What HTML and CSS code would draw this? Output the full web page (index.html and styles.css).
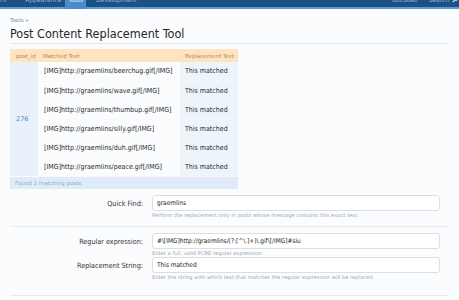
FILE: index.html
```html
<!DOCTYPE html>
<html>
<head>
<meta charset="utf-8">
<link rel="stylesheet" href="styles.css">
</head>
<body>
<div class="topbar">
  <div class="tabs">
    <span class="tab">ers</span>
    <span class="tab">Appearance</span>
    <span class="tab active">Tools</span>
    <span class="tab">Development</span>
  </div>
  <div class="tabs right">
    <span class="tab">Bbcodes</span>
    <span class="tab">Search
      <svg class="mag" width="7" height="7" viewBox="0 0 7 7"><circle cx="4.3" cy="2.7" r="1.8" fill="none" stroke="#d6e6f5" stroke-width="0.9"/><path d="M3 4 L0.8 6.2" stroke="#d6e6f5" stroke-width="1.1"/></svg>
    </span>
  </div>
</div>
<div class="strip"></div>
<div class="page">
  <div class="crumb">Tools »</div>
  <h1 class="title">Post Content Replacement Tool</h1>

  <table class="results">
    <colgroup><col class="w-id"><col class="w-match"><col class="w-rep"></colgroup>
    <thead>
      <tr><th class="c-id">post_id</th><th class="c-match">Matched Text</th><th class="c-rep">Replacement Text</th></tr>
    </thead>
    <tbody>
      <tr><td class="c-id" rowspan="6">276</td><td class="c-match">[IMG]http://graemlins/beerchug.gif[/IMG]</td><td class="c-rep">This matched</td></tr>
      <tr><td class="c-match">[IMG]http://graemlins/wave.gif[/IMG]</td><td class="c-rep">This matched</td></tr>
      <tr><td class="c-match">[IMG]http://graemlins/thumbup.gif[/IMG]</td><td class="c-rep">This matched</td></tr>
      <tr><td class="c-match">[IMG]http://graemlins/silly.gif[/IMG]</td><td class="c-rep">This matched</td></tr>
      <tr><td class="c-match">[IMG]http://graemlins/duh.gif[/IMG]</td><td class="c-rep">This matched</td></tr>
      <tr><td class="c-match">[IMG]http://graemlins/peace.gif[/IMG]</td><td class="c-rep">This matched</td></tr>
    </tbody>
    <tfoot>
      <tr><td colspan="3">Found 1 matching posts.</td></tr>
    </tfoot>
  </table>

  <div class="form">
    <div class="row">
      <div class="label">Quick Find:</div>
      <div class="field">
        <div class="input">graemlins</div>
        <div class="hint">Perform the replacement only in posts whose message contains this exact text.</div>
      </div>
    </div>
    <div class="sep"></div>
    <div class="row">
      <div class="label">Regular expression:</div>
      <div class="field">
        <div class="input">#\[IMG]http://graemlins/(?:[^\.]+)\.gif\[/IMG]#siu</div>
        <div class="hint">Enter a full, valid PCRE regular expression.</div>
      </div>
    </div>
    <div class="row">
      <div class="label">Replacement String:</div>
      <div class="field">
        <div class="input">This matched</div>
        <div class="hint">Enter the string with which text that matches the regular expression will be replaced.</div>
      </div>
    </div>
    <div class="endline"></div>
  </div>
</div>
</body>
</html>
```
FILE: styles.css
```css
* { box-sizing: border-box; }
html, body { margin: 0; padding: 0; }
body {
  background: #fbfcfe;
  font-family: "DejaVu Sans", "Liberation Sans", sans-serif;
  color: #222;
  width: 459px;
  height: 300px;
  overflow: hidden;
}
.topbar {
  height: 7px;
  background: #1c5283;
  display: flex;
  justify-content: space-between;
  position: relative;
  z-index: 1;
}
.tabs {
  display: flex;
  margin-top: -4px;
  height: 11px;
}
.tab {
  font-size: 6px;
  line-height: 8px;
  color: #8fb5d8;
  padding: 0 6px;
  white-space: nowrap;
}
.tabs .tab:first-child { padding-left: 0; margin-left: -3px; margin-right: 7px; }
.tab.active {
  background: #4a8ccb;
  color: #e8f1fa;
  height: 13px;
  padding: 0 3px 0 3px;
  margin-left: -2px;
  margin-right: 4px;
}
.tabs.right .tab { padding: 0 0 0 11px; }
.tabs.right .tab:first-child { margin: 0; }
.mag { vertical-align: -1px; margin-left: 1px; }
.strip {
  height: 2px;
  background: #5b9bd6;
}
.page { padding: 0 10px; }
.crumb {
  font-size: 5.5px;
  color: #6f90b2;
  margin-top: 8px;
  line-height: 6px;
}
.title {
  font-family: "DejaVu Sans Condensed", "DejaVu Sans", sans-serif;
  font-weight: normal;
  font-size: 12.5px;
  line-height: 15px;
  margin: 3px 0 0;
  padding-bottom: 2px;
  border-bottom: 1px solid #e3e9ef;
  color: #262626;
}
.results {
  border-collapse: collapse;
  table-layout: fixed;
  margin-top: 5px;
  width: 228px;
  font-size: 7px;
}
.w-id { width: 28px; }
.w-match { width: 142px; }
.w-rep { width: 58px; }
.results th {
  background: #fde4bf;
  color: #b58a55;
  font-weight: normal;
  font-size: 5.5px;
  text-align: left;
  height: 13px;
  padding: 0 5px;
  white-space: nowrap;
  overflow: hidden;
}
.results th.c-id { padding-left: 6px; }
.results td {
  height: 19px;
  padding: 0 5px;
  border-bottom: 1px solid #f6f9fc;
  white-space: nowrap;
  overflow: hidden;
}
.results td.c-id {
  background: #e8f1fa;
  color: #4d86bd;
  vertical-align: middle;
  padding-left: 6px;
  font-size: 6.5px;
  border-bottom: none;
}
.results td.c-match {
  background: #fafcfe;
  color: #2a2a2a;
  padding-left: 6px;
  font-family: "DejaVu Sans Condensed", "DejaVu Sans", sans-serif;
}
.results td.c-rep {
  background: #edf4fb;
  color: #2a2a2a;
  font-family: "DejaVu Sans Condensed", "DejaVu Sans", sans-serif;
}
.results tfoot td {
  background: #dfecf8;
  color: #8cacc9;
  font-size: 5.5px;
  height: 13px;
  border-bottom: none;
}
.form { margin-top: 6px; }
.row {
  display: grid;
  grid-template-columns: 133px 288px;
  column-gap: 9px;
}
.label {
  text-align: right;
  font-size: 7.2px;
  color: #333;
  padding-top: 4px;
  font-family: "DejaVu Sans Condensed", "DejaVu Sans", sans-serif;
}
.input {
  height: 16px;
  border: 1px solid #d8dfe6;
  border-radius: 3px;
  background: #fff;
  font-size: 6.5px;
  line-height: 14px;
  padding: 0 4px;
  color: #222;
  font-family: "DejaVu Sans Condensed", "DejaVu Sans", sans-serif;
  white-space: nowrap;
  overflow: hidden;
}
.hint {
  font-size: 5.2px;
  color: #a3a9b0;
  margin-top: 1px;
  line-height: 7px;
}
.sep {
  border-top: 1px solid #e6ebf0;
  margin: 7px 0 6px;
}
.endline {
  border-top: 1px solid #e6ebf0;
  margin-top: 14px;
}
```
